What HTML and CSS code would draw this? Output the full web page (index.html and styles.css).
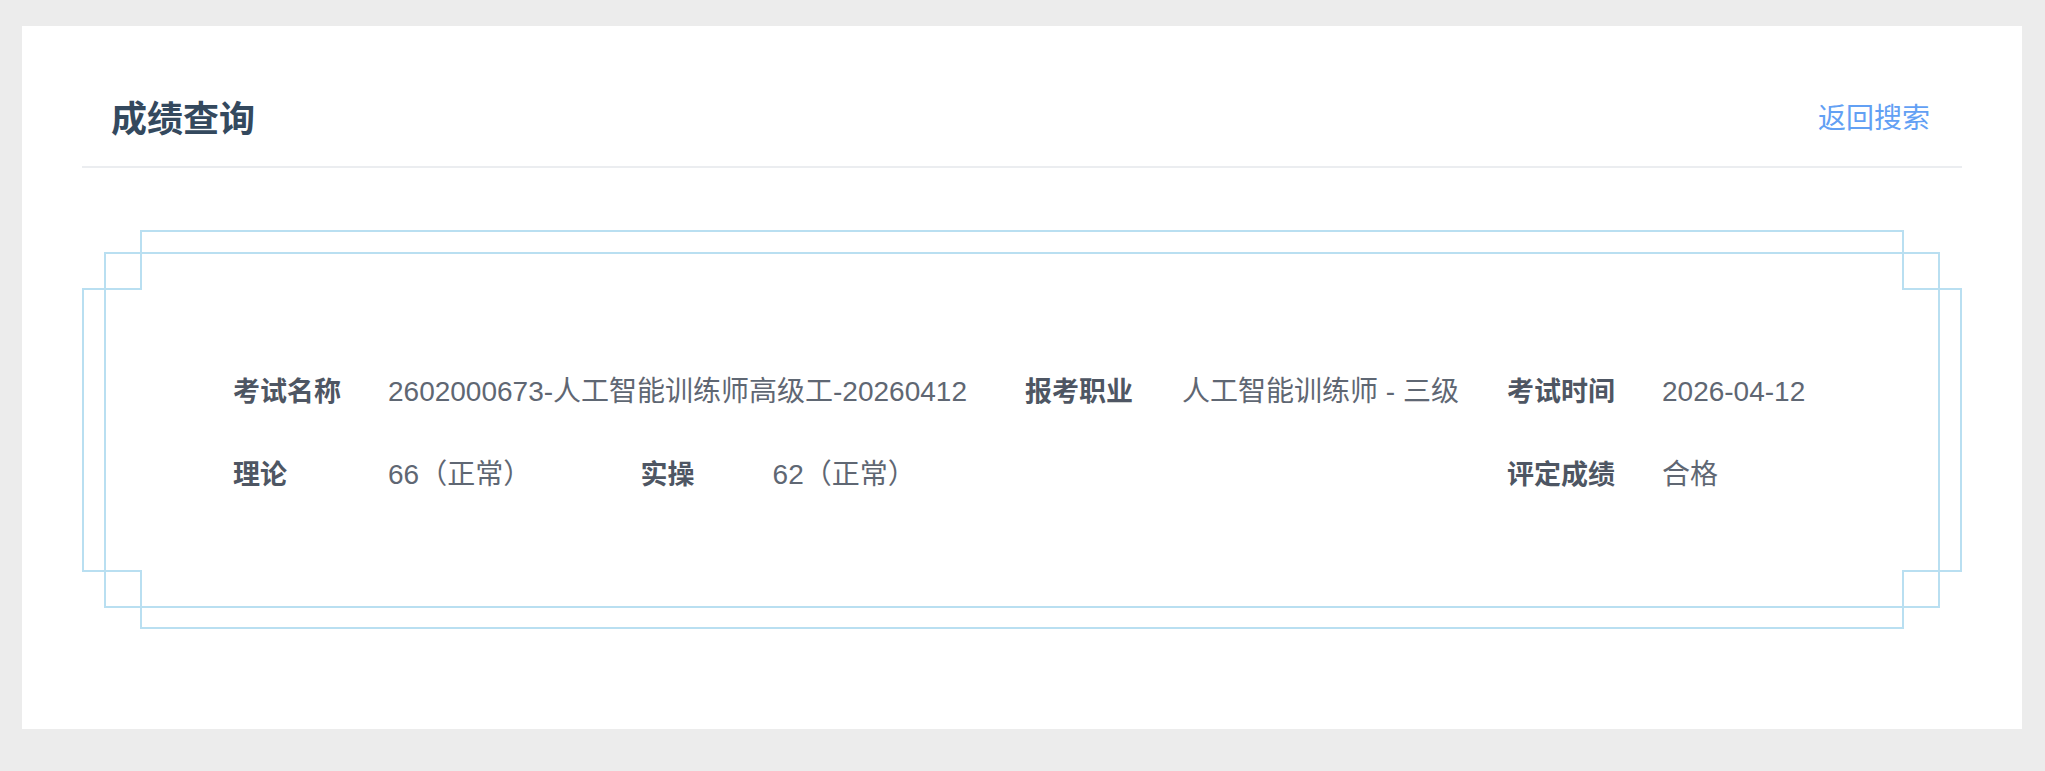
FILE: index.html
```html
<!DOCTYPE html>
<html lang="zh-CN">
<head>
<meta charset="utf-8">
<title>成绩查询</title>
<link rel="stylesheet" href="styles.css">
</head>
<body>
<div class="card">
  <div class="header">
    <h1 class="title">成绩查询</h1>
    <a class="back-link" href="#">返回搜索</a>
  </div>
  <div class="frame">
    <svg class="frame-lines" width="1880" height="400" viewBox="0 0 1880 400" aria-hidden="true">
      <path d="M59 1 H1821 V59 H1879 V341 H1821 V398 H59 V341 H1 V59 H59 Z" fill="none" stroke="#b9dff1" stroke-width="2"/>
      <rect x="23" y="23" width="1834" height="354" fill="none" stroke="#b9dff1" stroke-width="2"/>
    </svg>
    <div class="result-grid">
      <div class="label">考试名称</div>
      <div class="value">2602000673-人工智能训练师高级工-20260412</div>
      <div class="label">报考职业</div>
      <div class="value">人工智能训练师 - 三级</div>
      <div class="label">考试时间</div>
      <div class="value">2026-04-12</div>

      <div class="label">理论</div>
      <div class="value score-cell">
        <span class="score">66（正常）</span>
        <span class="label sub-label">实操</span>
        <span class="score">62（正常）</span>
      </div>
      <div class="spacer"></div>
      <div class="spacer"></div>
      <div class="label">评定成绩</div>
      <div class="value">合格</div>
    </div>
  </div>
</div>
</body>
</html>
```

FILE: styles.css
```css
html, body {
  margin: 0;
  padding: 0;
}

body {
  background: #ececec;
  padding: 26px 23px 42px 22px;
  font-family: "Liberation Sans", "Noto Sans CJK SC", sans-serif;
}

.card {
  background: #ffffff;
  width: 2000px;
  height: 703px;
  box-sizing: border-box;
  padding: 40px 60px 0 60px;
}

.header {
  height: 100px;
  border-bottom: 2px solid #ebedf0;
  display: flex;
  align-items: center;
  justify-content: space-between;
  padding: 0 32px 0 29px;
}

.title {
  margin: 0;
  font-family: "Noto Sans CJK SC", sans-serif;
  font-size: 36px;
  font-weight: 700;
  color: #34495e;
  line-height: 1;
}

.back-link {
  font-family: "Noto Sans CJK SC", sans-serif;
  font-size: 28px;
  color: #62a0f4;
  text-decoration: none;
  line-height: 1;
}

.frame {
  position: relative;
  margin-top: 62px;
  height: 400px;
  box-sizing: border-box;
  padding: 142px 0 0 151px;
}

.frame-lines {
  position: absolute;
  left: 0;
  top: 0;
}

.result-grid {
  position: relative;
  display: grid;
  grid-template-columns: 155px 637px 157px 325px 155px auto;
  row-gap: 43px;
  font-size: 28px;
  line-height: 40px;
}

.label {
  font-weight: 700;
  font-size: 27px;
  color: #4e5663;
  white-space: nowrap;
}

.value {
  color: #5f6773;
  white-space: nowrap;
}

.score-cell {
  display: flex;
}

.score {
  width: 254px;
}

.sub-label {
  width: 133px;
}
```
